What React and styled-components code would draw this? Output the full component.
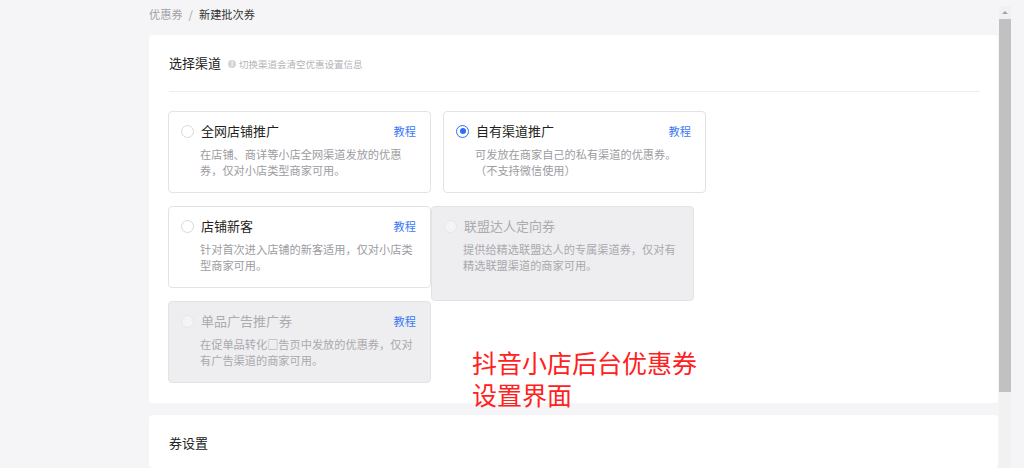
import React from "react";
import styled, { createGlobalStyle, css } from "styled-components";

const GlobalStyle = createGlobalStyle`
  html, body {
    margin: 0;
    padding: 0;
    background: #f5f5f7;
  }
  body {
    font-family: "Noto Sans CJK SC", "Noto Sans", sans-serif;
    overflow: hidden;
  }
`;

const Page = styled.div`
  display: flex;
  gap: 1px;
  height: 468px;
  padding-left: 149px;
  box-sizing: border-box;
  overflow: hidden;
`;

const Main = styled.div`
  position: relative;
  width: 849px;
  display: flex;
  flex-direction: column;
  gap: 12px;
  min-height: 0;
`;

const Breadcrumb = styled.div`
  flex: none;
  height: 28px;
  margin-bottom: -5px;
  display: flex;
  align-items: center;
  gap: 6px;
  font-size: 11.2px;
  color: #9a9a9f;
`;

const Crumb = styled.span`
  color: ${(p) => (p.$current ? "#333" : "#a0a0a5")};
`;

const Panel = styled.section`
  flex: none;
  background: #fff;
  border-radius: 4px;
  padding: 18px 18px 20px 20px;
  box-sizing: border-box;
  ${(p) =>
    p.$grow &&
    css`
      flex: 1 1 auto;
      min-height: 0;
      overflow: hidden;
    `}
`;

const SectionHeader = styled.div`
  display: flex;
  align-items: center;
  height: 20px;
  gap: 7px;
`;

const SectionTitle = styled.h2`
  margin: 0;
  font-size: 13px;
  font-weight: 400;
  color: #222;
  line-height: 20px;
`;

const Hint = styled.span`
  display: flex;
  align-items: center;
  gap: 3px;
  font-size: 9.5px;
  color: #b4b4b8;
  padding-top: 1px;
`;

const HintDot = styled.span`
  width: 8px;
  height: 8px;
  border-radius: 50%;
  background: #d4d4d8;
  display: inline-flex;
  align-items: center;
  justify-content: center;
  color: #fff;
  font-size: 6px;
  font-weight: 700;
  line-height: 1;
`;

const Divider = styled.div`
  height: 1px;
  background: #eeeef0;
  margin: 18px 0 19px;
`;

const CardGrid = styled.div`
  display: grid;
  grid-template-columns: 263px 263px;
  grid-auto-rows: 82px;
  column-gap: 12px;
  row-gap: 13px;
  margin-left: -1px;
`;

const Card = styled.div`
  box-sizing: border-box;
  border: 1px solid #e2e3e7;
  border-radius: 4px;
  padding: 9px 14px 0 12px;
  background: ${(p) => (p.$disabled ? "#eeeef0" : "#fff")};
  height: ${(p) => (p.$tall ? "95px" : "82px")};
  align-self: start;
  ${(p) =>
    p.$shift &&
    css`
      margin-left: -12px;
      width: 263px;
      grid-row: span 2;
    `}
`;

const CardHead = styled.div`
  display: flex;
  align-items: center;
  height: 20px;
`;

const Radio = styled.span`
  box-sizing: border-box;
  width: 13px;
  height: 13px;
  border-radius: 50%;
  flex: none;
  display: inline-flex;
  align-items: center;
  justify-content: center;
  border: ${(p) =>
    p.$checked ? "1.5px solid #2f6cf6" : p.$disabled ? "1px solid #e6e6e8" : "1px solid #d8d8dc"};
  background: ${(p) => (p.$disabled ? "#f4f4f5" : "#fff")};
  &::after {
    content: "";
    display: ${(p) => (p.$checked ? "block" : "none")};
    width: 6px;
    height: 6px;
    border-radius: 50%;
    background: #2f6cf6;
  }
`;

const CardTitle = styled.span`
  margin-left: 7px;
  flex: 1;
  font-size: 13px;
  line-height: 20px;
  color: ${(p) => (p.$disabled ? "#ababaf" : "#1f1f22")};
`;

const Link = styled.a`
  font-size: 11.2px;
  color: #3a78f7;
  text-decoration: none;
  cursor: pointer;
`;

const CardDesc = styled.p`
  margin: 6px 0 0 19px;
  font-size: 11.2px;
  line-height: 15.5px;
  color: ${(p) => (p.$disabled ? "#a9a9ad" : "#9c9ca1")};
`;

const Annotation = styled.div`
  position: absolute;
  left: 323px;
  top: 346px;
  font-size: 25px;
  line-height: 32px;
  color: #ff2020;
  pointer-events: none;
`;

const ScrollTrack = styled.div`
  flex: none;
  margin-top: 6px;
  width: 12px;
  background: #f1f1f1;
  display: flex;
  flex-direction: column;
`;

const ScrollArrow = styled.div`
  height: 13px;
  display: flex;
  align-items: center;
  justify-content: center;
  &::before {
    content: "";
    border-left: 3px solid transparent;
    border-right: 3px solid transparent;
    border-bottom: 3px solid #a3a3a3;
  }
`;

const ScrollThumb = styled.div`
  height: 373px;
  background: #c1c1c1;
`;

const channels = [
  {
    title: "全网店铺推广",
    desc: "在店铺、商详等小店全网渠道发放的优惠券，仅对小店类型商家可用。",
    link: true,
  },
  {
    title: "自有渠道推广",
    desc: "可发放在商家自己的私有渠道的优惠券。（不支持微信使用）",
    link: true,
    checked: true,
  },
  {
    title: "店铺新客",
    desc: "针对首次进入店铺的新客适用，仅对小店类型商家可用。",
    link: true,
  },
  {
    title: "联盟达人定向券",
    desc: "提供给精选联盟达人的专属渠道券，仅对有精选联盟渠道的商家可用。",
    disabled: true,
    tall: true,
    shift: true,
  },
  {
    title: "单品广告推广券",
    desc: "在促单品转化□告页中发放的优惠券，仅对有广告渠道的商家可用。",
    disabled: true,
    link: true,
  },
];

export default function App() {
  return (
    <>
      <GlobalStyle />
      <Page>
        <Main>
          <Breadcrumb>
            <Crumb>优惠券</Crumb>
            <Crumb>/</Crumb>
            <Crumb $current>新建批次券</Crumb>
          </Breadcrumb>
          <Panel>
            <SectionHeader>
              <SectionTitle>选择渠道</SectionTitle>
              <Hint>
                <HintDot>!</HintDot>
                切换渠道会清空优惠设置信息
              </Hint>
            </SectionHeader>
            <Divider />
            <CardGrid>
              {channels.map((c) => (
                <Card key={c.title} $disabled={c.disabled} $tall={c.tall} $shift={c.shift}>
                  <CardHead>
                    <Radio $checked={c.checked} $disabled={c.disabled} />
                    <CardTitle $disabled={c.disabled}>{c.title}</CardTitle>
                    {c.link && <Link>教程</Link>}
                  </CardHead>
                  <CardDesc $disabled={c.disabled}>{c.desc}</CardDesc>
                </Card>
              ))}
            </CardGrid>
          </Panel>
          <Panel $grow>
            <SectionHeader>
              <SectionTitle>券设置</SectionTitle>
            </SectionHeader>
          </Panel>
          <Annotation>
            抖音小店后台优惠券
            <br />
            设置界面
          </Annotation>
        </Main>
        <ScrollTrack>
          <ScrollArrow />
          <ScrollThumb />
        </ScrollTrack>
      </Page>
    </>
  );
}
